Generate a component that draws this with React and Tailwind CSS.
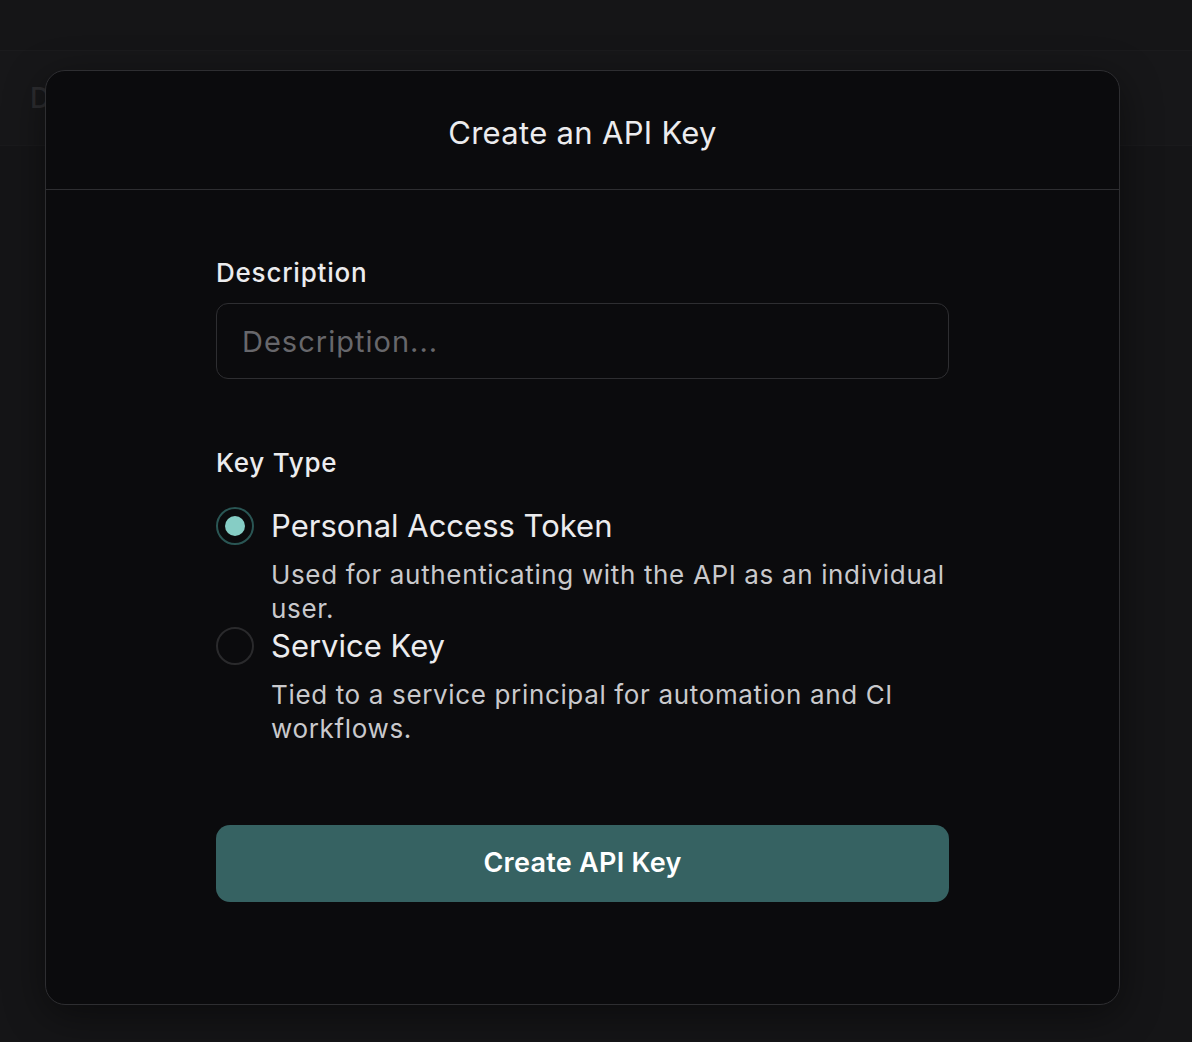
import React from "react";

function Radio({ checked }) {
  return checked ? (
    <div className="w-[38px] h-[38px] shrink-0 rounded-full border-2 border-[#2a5654] flex items-center justify-center">
      <div className="w-[20px] h-[20px] rounded-full bg-[#86cdc5]" />
    </div>
  ) : (
    <div className="w-[38px] h-[38px] shrink-0 rounded-full border-2 border-[#2a2a2c]" />
  );
}

function Option({ checked, title, desc, className = "" }) {
  return (
    <div className={className}>
      <div className="flex items-center gap-[17px]">
        <Radio checked={checked} />
        <div className="text-[31px] leading-[40px] text-[#ececee]">{title}</div>
      </div>
      <div className="pl-[55px] mt-[12px] text-[26px] leading-[34px] tracking-[0.025em] text-[#c9c9cc]">{desc}</div>
    </div>
  );
}

export default function App() {
  return (
    <div
      className="relative w-[1192px] h-[1042px] bg-[#151517] overflow-hidden"
      style={{ fontFamily: "Inter, 'Noto Sans', sans-serif" }}
    >
      <div className="h-[51px] border-b border-[#1b1b1d]" />
      <div className="h-[95px] bg-[#171719] border-b border-[#1a1a1c] flex items-center pl-[30px]">
        <span className="text-[28px] font-medium text-[#2c2c2f]">Dashboard</span>
      </div>

      <div className="absolute left-[45px] top-[70px] w-[1075px] h-[935px] rounded-[20px] border border-[#2e2e31] bg-[#0b0b0d] shadow-[0_10px_40px_rgba(0,0,0,0.45)] flex flex-col">
        <div className="h-[119px] pt-[6px] border-b border-[#2e2e31] flex items-center justify-center">
          <h1 className="text-[31px] tracking-[0.01em] text-[#ececee] font-normal">Create an API Key</h1>
        </div>
        <div className="flex flex-col w-[733px] mx-auto pt-[65px]">
          <label className="text-[26px] leading-[36px] tracking-[0.03em] font-medium text-[#ececee]">Description</label>
          <input
            className="mt-[12px] h-[76px] rounded-[12px] border border-[#2e2e31] bg-transparent px-[25px] text-[29px] tracking-[0.035em] text-[#ececee] placeholder-[#67676b] outline-none"
            placeholder="Description..."
          />
          <div className="mt-[66px] text-[26px] leading-[36px] tracking-[0.03em] font-medium text-[#ececee]">Key Type</div>
          <Option
            className="mt-[25px]"
            checked
            title="Personal Access Token"
            desc="Used for authenticating with the API as an individual user."
          />
          <Option
            title="Service Key"
            desc="Tied to a service principal for automation and CI workflows."
          />
          <button className="mt-[79px] h-[77px] rounded-[14px] bg-[#366262] text-white text-[27px] tracking-[0.01em] font-semibold">
            Create API Key
          </button>
        </div>
      </div>
    </div>
  );
}
